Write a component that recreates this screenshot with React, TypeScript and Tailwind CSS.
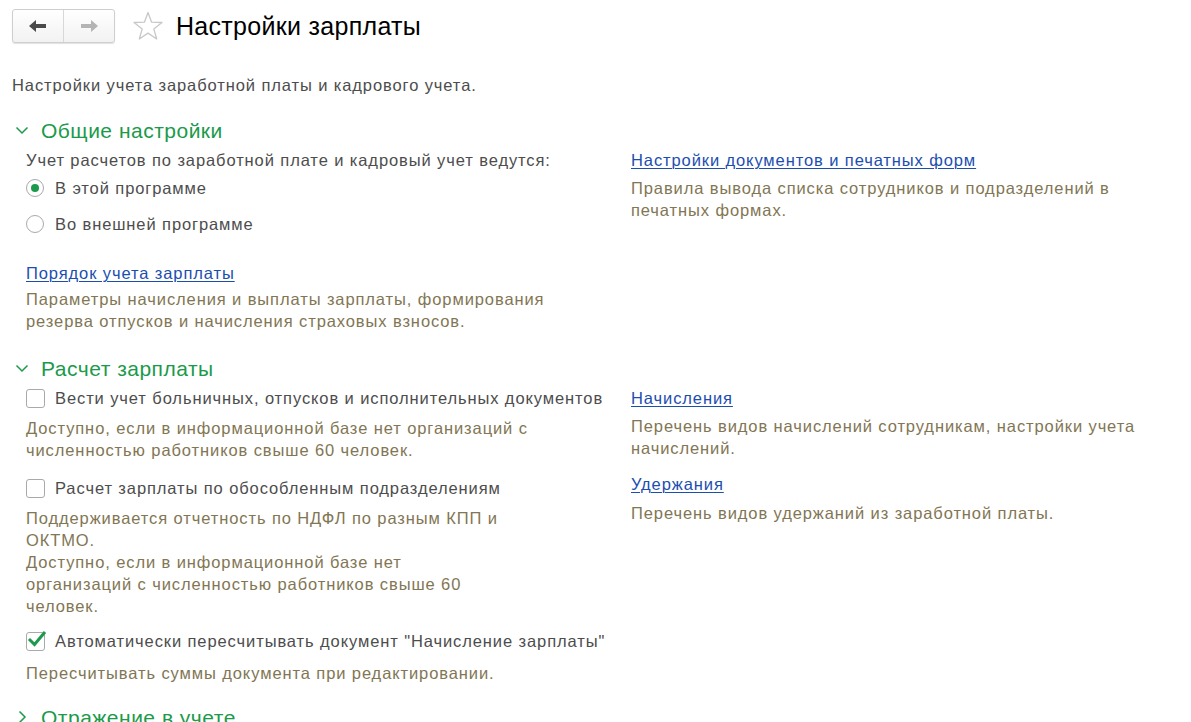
import React from "react";

const font = { fontFamily: '"Liberation Sans", Arial, sans-serif' };

const Chevron = ({ open }: { open: boolean }) => (
    <svg width="14" height="14" viewBox="0 0 14 14" className="shrink-0">
        {open ? (
            <path d="M1.5 4.5 L7 10 L12.5 4.5" fill="none" stroke="#1a9a4a" strokeWidth="1.5" />
        ) : (
            <path d="M4.5 1.5 L10 7 L4.5 12.5" fill="none" stroke="#1a9a4a" strokeWidth="1.5" />
        )}
    </svg>
);

const Radio = ({ checked, label }: { checked?: boolean; label: string }) => (
    <div className="flex items-center h-[36px]">
        <span className="w-[18px] h-[18px] rounded-full border border-[#a9a9a9] bg-white flex items-center justify-center mr-[11px]">
            {checked && <span className="w-[8px] h-[8px] rounded-full bg-[#1a9a4a]" />}
        </span>
        <span className="text-[#4d4d4d]">{label}</span>
    </div>
);

const Check = ({ checked, label }: { checked?: boolean; label: string }) => (
    <div className="flex items-center h-[22px]">
        <span className="relative w-[19px] h-[19px] rounded-[3px] border border-[#a9a9a9] bg-white mr-[10px] shrink-0">
            {checked && (
                <svg width="22" height="20" viewBox="0 0 22 20" className="absolute -left-[1px] -top-[4px]">
                    <path d="M3 10 L8.5 15.5 L19 3" fill="none" stroke="#1a9a4a" strokeWidth="3" />
                </svg>
            )}
        </span>
        <span className="text-[#4d4d4d] whitespace-nowrap">{label}</span>
    </div>
);

const Desc = ({ lines }: { lines: string[] }) => (
    <div className="text-[#827654] leading-[22px]">
        {lines.map((l, i) => (
            <div key={i} className="whitespace-nowrap">{l}</div>
        ))}
    </div>
);

const Link = ({ children }: { children: React.ReactNode }) => (
    <a href="#" className="text-[#1c4eb0] underline underline-offset-[2px] decoration-1 whitespace-nowrap">{children}</a>
);

const SectionHeader = ({ title, open = true }: { title: string; open?: boolean }) => (
    <div className="flex items-center gap-[12px] pl-[15px] h-[30px]">
        <Chevron open={open} />
        <span className="text-[21px] tracking-[0.5px] text-[#1a9a4a]">{title}</span>
    </div>
);

export default function App() {
    return (
        <div className="w-[1191px] h-[722px] overflow-hidden bg-white text-[16.5px] leading-[23px] tracking-[0.9px]" style={font}>
            {/* Title bar */}
            <div className="flex items-center h-[50px] pl-[12px] pt-[1px]">
                <div className="flex h-[34px] w-[103px] rounded-[3px] border border-[#cfcfcf] bg-gradient-to-b from-white to-[#f2f2f2] shadow-[0_1px_1px_rgba(0,0,0,0.12)]">
                    <div className="flex-1 flex items-center justify-center border-r border-[#d8d8d8]">
                        <svg width="20" height="14" viewBox="0 0 20 14">
                            <path d="M1 7 L8 1 L8 5 L18 5 L18 9 L8 9 L8 13 Z" fill="#4a4a4a" />
                        </svg>
                    </div>
                    <div className="flex-1 flex items-center justify-center">
                        <svg width="20" height="14" viewBox="0 0 20 14">
                            <path d="M19 7 L12 1 L12 5 L2 5 L2 9 L12 9 L12 13 Z" fill="#b4b4b4" />
                        </svg>
                    </div>
                </div>
                <svg width="32" height="30" viewBox="0 0 32 30" className="ml-[17px]">
                    <path
                        d="M16 1.5 L19.6 11.2 L30 11.5 L21.8 17.9 L24.7 28 L16 22.1 L7.3 28 L10.2 17.9 L2 11.5 L12.4 11.2 Z"
                        fill="none"
                        stroke="#c8c8c8"
                        strokeWidth="1.3"
                        strokeLinejoin="round"
                    />
                </svg>
                <h1 className="ml-[12px] text-[25px] leading-[30px] tracking-[0.3px] text-black">Настройки зарплаты</h1>
            </div>

            <div className="pl-[12px] mt-[24px] text-[#4d4d4d]">Настройки учета заработной платы и кадрового учета.</div>

            {/* Общие настройки */}
            <div className="mt-[18px]">
                <SectionHeader title="Общие настройки" />
                <div className="grid grid-cols-[631px_1fr] mt-[4px]">
                    <div className="pl-[26px]">
                        <div className="text-[#4d4d4d] whitespace-nowrap">Учет расчетов по заработной плате и кадровый учет ведутся:</div>
                        <div className="-mt-[2px]">
                            <Radio checked label="В этой программе" />
                            <Radio label="Во внешней программе" />
                        </div>
                        <div className="mt-[20px]">
                            <Link>Порядок учета зарплаты</Link>
                        </div>
                        <div className="mt-[3px]">
                            <Desc lines={["Параметры начисления и выплаты зарплаты, формирования", "резерва отпусков и начисления страховых взносов."]} />
                        </div>
                    </div>
                    <div>
                        <Link>Настройки документов и печатных форм</Link>
                        <div className="mt-[5px]">
                            <Desc lines={["Правила вывода списка сотрудников и подразделений в", "печатных формах."]} />
                        </div>
                    </div>
                </div>
            </div>

            {/* Расчет зарплаты */}
            <div className="mt-[21px]">
                <SectionHeader title="Расчет зарплаты" />
                <div className="grid grid-cols-[631px_1fr] mt-[4px]">
                    <div className="pl-[26px]">
                        <Check label="Вести учет больничных, отпусков и исполнительных документов" />
                        <div className="mt-[8px]">
                            <Desc lines={["Доступно, если в информационной базе нет организаций с", "численностью работников свыше 60 человек."]} />
                        </div>
                        <div className="mt-[16px]">
                            <Check label="Расчет зарплаты по обособленным подразделениям" />
                        </div>
                        <div className="mt-[8px]">
                            <Desc
                                lines={[
                                    "Поддерживается отчетность по НДФЛ по разным КПП и",
                                    "ОКТМО.",
                                    "Доступно, если в информационной базе нет",
                                    "организаций с численностью работников свыше 60",
                                    "человек.",
                                ]}
                            />
                        </div>
                        <div className="mt-[13px]">
                            <Check checked label={'Автоматически пересчитывать документ "Начисление зарплаты"'} />
                        </div>
                        <div className="mt-[10px]">
                            <Desc lines={["Пересчитывать суммы документа при редактировании."]} />
                        </div>
                    </div>
                    <div>
                        <Link>Начисления</Link>
                        <div className="mt-[5px]">
                            <Desc lines={["Перечень видов начислений сотрудникам, настройки учета", "начислений."]} />
                        </div>
                        <div className="mt-[14px]">
                            <Link>Удержания</Link>
                        </div>
                        <div className="mt-[6px]">
                            <Desc lines={["Перечень видов удержаний из заработной платы."]} />
                        </div>
                    </div>
                </div>
            </div>

            <div className="mt-[18px]">
                <SectionHeader title="Отражение в учете" open={false} />
            </div>
        </div>
    );
}
